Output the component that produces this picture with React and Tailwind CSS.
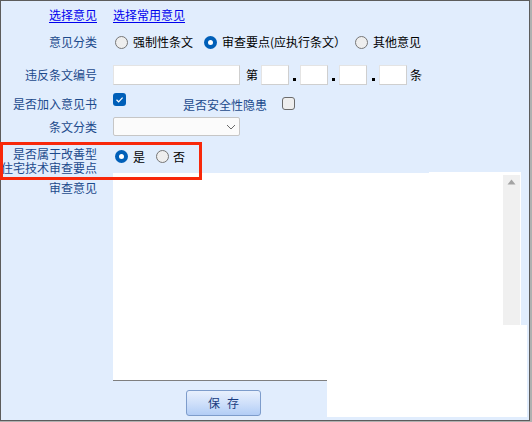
import React from "react";

const font = "font-['Noto_Sans_CJK_SC','Noto_Sans',sans-serif]";
const labelCls = "w-[96px] shrink-0 text-right text-[12px] leading-[18px] text-[#1c4a8c] whitespace-nowrap";

function Radio({ checked }) {
  return checked ? (
    <span className="w-[13px] h-[13px] rounded-full bg-[#005fb8] flex items-center justify-center shrink-0">
      <span className="block w-[5px] h-[5px] rounded-full bg-white" />
    </span>
  ) : (
    <span className="block w-[13px] h-[13px] rounded-full border border-[#767676] bg-[#eeeeee] shrink-0" />
  );
}

function Checkbox({ checked }) {
  return checked ? (
    <span className="w-[13px] h-[13px] rounded-[3px] bg-[#005fb8] flex items-center justify-center shrink-0">
      <svg width="13" height="13" viewBox="0 0 13 13">
        <path d="M3.5 6.8 L5.6 8.8 L9.6 4.6" fill="none" stroke="white" strokeWidth="1.2" />
      </svg>
    </span>
  ) : (
    <span className="block w-[13px] h-[13px] rounded-[3px] border border-[#6b6b6b] bg-[#eeeeee] shrink-0" />
  );
}

function SmallInput() {
  return <span className="block w-[28px] h-[20px] bg-white border border-[#e4e4e4] border-r-[#cfcfcf] border-b-[#cfcfcf] shrink-0" />;
}

function Dot({ w = "w-[11px]" }) {
  return (
    <span className={`${w} h-[20px] flex items-end justify-center pb-[4px] shrink-0`}>
      <span className="block w-[3px] h-[3px] bg-black" />
    </span>
  );
}

export default function App() {
  return (
    <div className={`w-[532px] h-[422px] bg-[#b0b0b0] ${font}`}>
      <div className="relative w-[530px] h-[421px] border border-[#5c5c5c] bg-[#e1edfd] overflow-visible">
        {/* Row 1 */}
        <div className="flex h-[18px] items-center mt-[5px]">
          <div className={labelCls}>
            <span className="text-[#0000ee] underline underline-offset-2">选择意见</span>
          </div>
          <div className="ml-[16px] text-[12px] leading-[18px] text-[#0000ee] underline underline-offset-2">选择常用意见</div>
        </div>

        {/* Row 2 */}
        <div className="flex h-[18px] items-center mt-[9px]">
          <div className={labelCls}>意见分类</div>
          <div className="ml-[18px] flex items-center text-[12px] leading-[18px] text-black">
            <Radio />
            <span className="ml-[5px]">强制性条文</span>
            <span className="ml-[11px] block"><Radio checked /></span>
            <span className="ml-[5px]">审查要点(应执行条文）</span>
            <span className="ml-[9px] block"><Radio /></span>
            <span className="ml-[5px]">其他意见</span>
          </div>
        </div>

        {/* Row 3 */}
        <div className="flex h-[20px] items-center mt-[14px]">
          <div className={labelCls}>违反条文编号</div>
          <div className="ml-[16px] flex items-center text-[12px] leading-[20px] text-black">
            <span className="block w-[127px] h-[20px] bg-white border border-[#e4e4e4] border-r-[#cfcfcf] border-b-[#cfcfcf]" />
            <span className="ml-[6px]">第</span>
            <span className="ml-[3px] block"><SmallInput /></span>
            <Dot />
            <SmallInput />
            <Dot />
            <SmallInput />
            <Dot w="w-[12px]" />
            <SmallInput />
            <span className="ml-[3px]">条</span>
          </div>
        </div>

        {/* Row 4 */}
        <div className="flex h-[20px] items-start mt-[7px]">
          <div className={`${labelCls} leading-[14px] mt-[3px]`}>是否加入意见书</div>
          <div className="ml-[16px] flex items-start text-[12px]">
            <span className="mt-[1px] block"><Checkbox checked /></span>
            <span className="ml-[57px] mt-[6px] leading-[14px] text-[#1c4a8c]">是否安全性隐患</span>
            <span className="ml-[15px] mt-[5px] block"><Checkbox /></span>
          </div>
        </div>

        {/* Row 5 */}
        <div className="flex h-[19px] items-center mt-[5px]">
          <div className={labelCls}>条文分类</div>
          <div className="ml-[16px] w-[127px] h-[19px] bg-[#fbfbfb] border border-[#c6c6c6] rounded-[2px] flex items-center justify-end pr-[3px]">
            <svg width="10" height="6" viewBox="0 0 10 6">
              <path d="M1 1 L5 5 L9 1" fill="none" stroke="#6a6a6a" strokeWidth="1" />
            </svg>
          </div>
        </div>

        {/* Row 6 */}
        <div className="flex h-[26px] items-start mt-[11px]">
          <div className="w-[96px] shrink-0 text-right text-[12px] leading-[13.5px] text-[#1c4a8c] whitespace-nowrap">
            <div>是否属于改善型</div>
            <div>住宅技术审查要点</div>
          </div>
          <div className="ml-[18px] mt-[3px] flex items-center text-[12px] leading-[13px] text-black">
            <Radio checked />
            <span className="ml-[5px]">是</span>
            <span className="ml-[11px] block"><Radio /></span>
            <span className="ml-[4px]">否</span>
          </div>
        </div>

        {/* Row 7 */}
        <div className="flex h-[208px] items-start">
          <div className={`${labelCls} leading-[14px] mt-[6px]`}>审查意见</div>
          <div className="ml-[16px] w-[408px] h-[208px] bg-white border-b border-[#7f7f7f] flex">
            <div className="flex-1" />
            <div className="w-[17px] h-full bg-[#f0f0f0] mr-[1px] flex justify-center pt-[6px]">
              <svg width="9" height="6" viewBox="0 0 9 6">
                <path d="M4.5 0.5 L8.5 5.5 L0.5 5.5 Z" fill="#a3a3a3" />
              </svg>
            </div>
          </div>
        </div>

        {/* Row 8 */}
        <div className="flex mt-[9px] pl-[185px]">
          <button className="w-[75px] h-[26px] rounded-[3px] border border-[#7d9ccb] bg-gradient-to-b from-[#e8f0fd] via-[#cfe0fa] to-[#b2cdf6] flex items-center justify-center gap-[7px] text-[12px] leading-[14px] text-[#1a3c80]">
            <span>保</span>
            <span>存</span>
          </button>
        </div>

        {/* overlays */}
        <div className="absolute left-[428px] top-[171px] w-[92px] h-[3px] bg-white" />
        <div className="absolute left-[326px] top-[324px] w-[200px] h-[92px] bg-white" />
        <div className="absolute left-[-1px] top-[141px] w-[202px] h-[38px] border-[3px] border-[#f8280a]" />
      </div>
    </div>
  );
}
